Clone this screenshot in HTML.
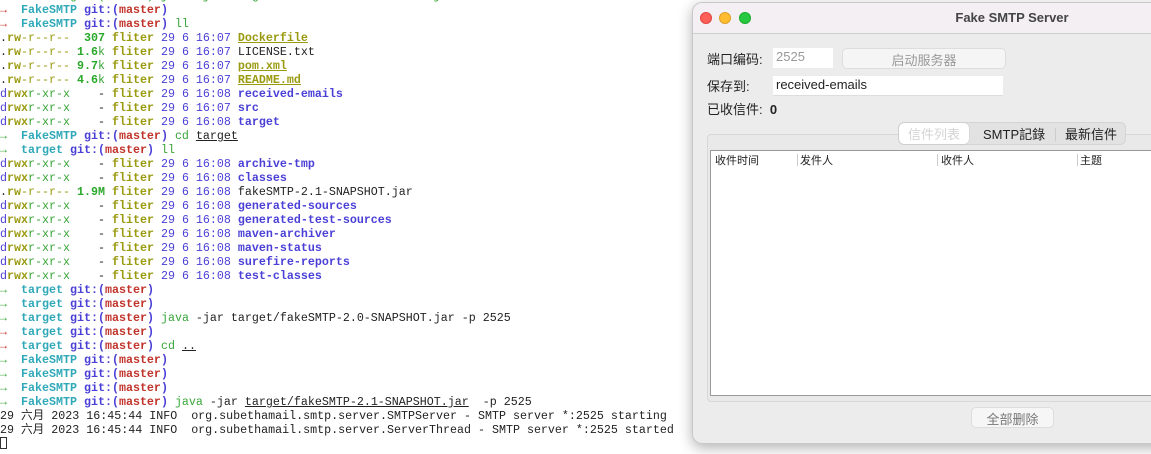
<!DOCTYPE html>
<html><head><meta charset="utf-8"><style>
*{margin:0;padding:0;box-sizing:border-box}
body{width:1151px;height:454px;overflow:hidden;background:#fff;position:relative;font-family:"Liberation Mono","Noto Sans CJK SC",monospace}
.term{position:absolute;left:0;top:-11px;font-size:11.67px;line-height:14px;white-space:pre;color:#222}
.ar{color:#c8332b;font-weight:bold}.ag{color:#3aa53a;font-weight:bold}
.cy{color:#2fa8b8;font-weight:bold}
.bl{color:#4a3fd6;font-weight:bold}
.rd{color:#c0332b;font-weight:bold}
.gr{color:#3aa53a}
.ol{color:#9a9a10;font-weight:bold}
.ol2{color:#9a9a10}
.ng{color:#2aa82a;font-weight:bold}
.u{text-decoration:underline}
.dy{color:#9a9a10;font-weight:bold;text-decoration:underline}
.p{color:#4a3fd6}
.win{position:absolute;left:692px;top:2px;width:480px;height:442px;background:#ececec;border-radius:10px;border:1px solid #c8c8c8;box-shadow:0 4px 14px rgba(0,0,0,.3);font-family:"Liberation Sans","Noto Sans CJK SC",sans-serif;font-size:13px;color:#222;overflow:hidden}
.title{height:31px;background:#f3eff3;border-bottom:1px solid #cfcfcf;position:relative}
.title .t{position:absolute;left:0;width:638px;text-align:center;top:7px;font-weight:bold;font-size:13px;color:#444}
.dot{position:absolute;top:9px;width:12px;height:12px;border-radius:50%}
.abs{position:absolute}
</style></head><body>
<div class="term"><span class="gr">   ...    git:(master) java -jar target/fakeSMTP-2.0-SNAPSHOT.jar</span>
<span class="ar">→</span>  <span class="cy">FakeSMTP</span> <span class="bl">git:(</span><span class="rd">master</span><span class="bl">)</span>
<span class="ar">→</span>  <span class="cy">FakeSMTP</span> <span class="bl">git:(</span><span class="rd">master</span><span class="bl">)</span> <span class="gr">ll</span>
.<span class="ol">rw</span><span class="ol2">-r--r--</span>  <span class="ng">307</span> <span class="ol">fliter</span> <span class="p">29 6 16:07</span> <span class="dy">Dockerfile</span>
.<span class="ol">rw</span><span class="ol2">-r--r--</span> <span class="ng">1.6</span><span class="gr">k</span> <span class="ol">fliter</span> <span class="p">29 6 16:07</span> LICENSE.txt
.<span class="ol">rw</span><span class="ol2">-r--r--</span> <span class="ng">9.7</span><span class="gr">k</span> <span class="ol">fliter</span> <span class="p">29 6 16:07</span> <span class="dy">pom.xml</span>
.<span class="ol">rw</span><span class="ol2">-r--r--</span> <span class="ng">4.6</span><span class="gr">k</span> <span class="ol">fliter</span> <span class="p">29 6 16:07</span> <span class="dy">README.md</span>
<span class="p">d</span><span class="ol">rwx</span><span class="gr">r-xr-x</span>    - <span class="ol">fliter</span> <span class="p">29 6 16:08</span> <span class="bl">received-emails</span>
<span class="p">d</span><span class="ol">rwx</span><span class="gr">r-xr-x</span>    - <span class="ol">fliter</span> <span class="p">29 6 16:07</span> <span class="bl">src</span>
<span class="p">d</span><span class="ol">rwx</span><span class="gr">r-xr-x</span>    - <span class="ol">fliter</span> <span class="p">29 6 16:08</span> <span class="bl">target</span>
<span class="ag">→</span>  <span class="cy">FakeSMTP</span> <span class="bl">git:(</span><span class="rd">master</span><span class="bl">)</span> <span class="gr">cd</span> <span class="u">target</span>
<span class="ag">→</span>  <span class="cy">target</span> <span class="bl">git:(</span><span class="rd">master</span><span class="bl">)</span> <span class="gr">ll</span>
<span class="p">d</span><span class="ol">rwx</span><span class="gr">r-xr-x</span>    - <span class="ol">fliter</span> <span class="p">29 6 16:08</span> <span class="bl">archive-tmp</span>
<span class="p">d</span><span class="ol">rwx</span><span class="gr">r-xr-x</span>    - <span class="ol">fliter</span> <span class="p">29 6 16:08</span> <span class="bl">classes</span>
.<span class="ol">rw</span><span class="ol2">-r--r--</span> <span class="ng">1.9M</span> <span class="ol">fliter</span> <span class="p">29 6 16:08</span> fakeSMTP-2.1-SNAPSHOT.jar
<span class="p">d</span><span class="ol">rwx</span><span class="gr">r-xr-x</span>    - <span class="ol">fliter</span> <span class="p">29 6 16:08</span> <span class="bl">generated-sources</span>
<span class="p">d</span><span class="ol">rwx</span><span class="gr">r-xr-x</span>    - <span class="ol">fliter</span> <span class="p">29 6 16:08</span> <span class="bl">generated-test-sources</span>
<span class="p">d</span><span class="ol">rwx</span><span class="gr">r-xr-x</span>    - <span class="ol">fliter</span> <span class="p">29 6 16:08</span> <span class="bl">maven-archiver</span>
<span class="p">d</span><span class="ol">rwx</span><span class="gr">r-xr-x</span>    - <span class="ol">fliter</span> <span class="p">29 6 16:08</span> <span class="bl">maven-status</span>
<span class="p">d</span><span class="ol">rwx</span><span class="gr">r-xr-x</span>    - <span class="ol">fliter</span> <span class="p">29 6 16:08</span> <span class="bl">surefire-reports</span>
<span class="p">d</span><span class="ol">rwx</span><span class="gr">r-xr-x</span>    - <span class="ol">fliter</span> <span class="p">29 6 16:08</span> <span class="bl">test-classes</span>
<span class="ag">→</span>  <span class="cy">target</span> <span class="bl">git:(</span><span class="rd">master</span><span class="bl">)</span>
<span class="ag">→</span>  <span class="cy">target</span> <span class="bl">git:(</span><span class="rd">master</span><span class="bl">)</span>
<span class="ag">→</span>  <span class="cy">target</span> <span class="bl">git:(</span><span class="rd">master</span><span class="bl">)</span> <span class="gr">java</span> -jar target/fakeSMTP-2.0-SNAPSHOT.jar -p 2525
<span class="ar">→</span>  <span class="cy">target</span> <span class="bl">git:(</span><span class="rd">master</span><span class="bl">)</span>
<span class="ar">→</span>  <span class="cy">target</span> <span class="bl">git:(</span><span class="rd">master</span><span class="bl">)</span> <span class="gr">cd</span> <span class="u">..</span>
<span class="ag">→</span>  <span class="cy">FakeSMTP</span> <span class="bl">git:(</span><span class="rd">master</span><span class="bl">)</span>
<span class="ag">→</span>  <span class="cy">FakeSMTP</span> <span class="bl">git:(</span><span class="rd">master</span><span class="bl">)</span>
<span class="ag">→</span>  <span class="cy">FakeSMTP</span> <span class="bl">git:(</span><span class="rd">master</span><span class="bl">)</span>
<span class="ag">→</span>  <span class="cy">FakeSMTP</span> <span class="bl">git:(</span><span class="rd">master</span><span class="bl">)</span> <span class="gr">java</span> -jar <span class="u">target/fakeSMTP-2.1-SNAPSHOT.jar</span>  -p 2525
29 六月 2023 16:45:44 INFO  org.subethamail.smtp.server.SMTPServer - SMTP server *:2525 starting
29 六月 2023 16:45:44 INFO  org.subethamail.smtp.server.ServerThread - SMTP server *:2525 started
<span style="display:inline-block;width:7px;height:12px;border:1px solid #333;vertical-align:-2px"></span></div>

<div class="win">
 <div class="title">
  <div class="dot" style="left:7px;background:#fe5f57;border:1px solid #e0443e"></div>
  <div class="dot" style="left:26px;background:#febc2e;border:1px solid #dea123"></div>
  <div class="dot" style="left:46px;background:#28c840;border:1px solid #1aab29"></div>
  <div class="t">Fake SMTP Server</div>
 </div>
 <div class="abs" style="left:14px;top:46px">端口编码:</div>
 <div class="abs" style="left:80px;top:45px;width:60px;height:20px;background:#fff;color:#999;padding:1px 3px">2525</div>
 <div class="abs" style="left:149px;top:45px;width:164px;height:21px;background:#f5f5f5;border:1px solid #ddd;border-radius:5px;color:#999;text-align:center;padding-top:1px">启动服务器</div>
 <div class="abs" style="left:14px;top:73px">保存到:</div>
 <div class="abs" style="left:80px;top:73px;width:230px;height:20px;background:#fff;padding:1px 3px;border-bottom:1px solid #ddd">received-emails</div>
 <div class="abs" style="left:14px;top:96px">已收信件:&nbsp;&nbsp;<b>0</b></div>
 <div class="abs" style="left:14px;top:131px;width:480px;height:268px;border:1px solid #d8d8d8;border-radius:4px;background:#e9e9e9"></div>
 <div class="abs" style="left:205px;top:119px;width:228px;height:23px;background:#e2e2e2;border:1px solid #d4d4d4;border-radius:6px"></div>
 <div class="abs" style="left:206px;top:120px;width:70px;height:21px;background:#fff;border-radius:5px;box-shadow:0 0 1px #aaa;color:#d4d4d4;text-align:center;padding-top:1px">信件列表</div>
 <div class="abs" style="left:290px;top:121px">SMTP記錄</div>
 <div class="abs" style="left:362px;top:125px;width:1px;height:13px;background:#ccc"></div>
 <div class="abs" style="left:372px;top:121px">最新信件</div>
 <div class="abs" style="left:17px;top:147px;width:470px;height:246px;background:#fff;border:1px solid #999"></div>
 <div class="abs" style="left:22px;top:149px;font-size:11px">收件时间</div>
 <div class="abs" style="left:104px;top:151px;width:1px;height:12px;background:#ccc"></div>
 <div class="abs" style="left:107px;top:149px;font-size:11px">发件人</div>
 <div class="abs" style="left:244px;top:151px;width:1px;height:12px;background:#ccc"></div>
 <div class="abs" style="left:248px;top:149px;font-size:11px">收件人</div>
 <div class="abs" style="left:384px;top:151px;width:1px;height:12px;background:#ccc"></div>
 <div class="abs" style="left:387px;top:149px;font-size:11px">主题</div>
 <div class="abs" style="left:278px;top:404px;width:83px;height:21px;background:#f6f6f6;border:1px solid #ddd;border-radius:5px;color:#777;text-align:center;padding-top:1px">全部删除</div>
</div>
</body></html>
